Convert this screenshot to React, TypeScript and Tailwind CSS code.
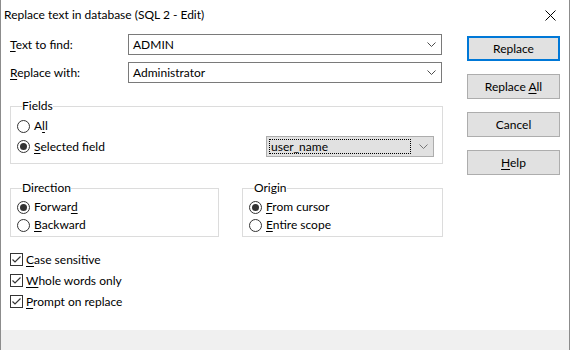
import React from "react";

const font = { fontFamily: 'Lato, "Noto Sans", sans-serif' };

function Chevron({ color = "#4d4d4d" }: { color?: string }) {
  return (
    <svg width="9" height="5" viewBox="0 0 9 5">
      <polyline points="0.5,0.5 4.5,4.5 8.5,0.5" fill="none" stroke={color} strokeWidth="1" />
    </svg>
  );
}

function Ul({ children }: { children: React.ReactNode }) {
  return <span className="underline underline-offset-2">{children}</span>;
}

function Radio({ checked, children }: { checked?: boolean; children: React.ReactNode }) {
  return (
    <div className="flex items-center gap-[4px] h-[18px]">
      <span className="w-[13px] h-[13px] rounded-full border border-[#333333] flex items-center justify-center bg-white">
        {checked && <span className="w-[7px] h-[7px] rounded-full bg-[#333333]" />}
      </span>
      <span>{children}</span>
    </div>
  );
}

function Check({ children }: { children: React.ReactNode }) {
  return (
    <div className="flex items-center gap-[3px] h-[21px]">
      <span className="w-[13px] h-[13px] border border-[#333333] flex items-center justify-center bg-white">
        <svg width="11" height="11" viewBox="0 0 11 11">
          <polyline points="1.5,5.5 4,8 9.5,2.5" fill="none" stroke="#333333" strokeWidth="1.2" />
        </svg>
      </span>
      <span>{children}</span>
    </div>
  );
}

function Combo({ value }: { value: string }) {
  return (
    <div className="w-[314px] h-[21px] border border-[#7a7a7a] bg-white flex items-center pl-[4px] pr-[5px]">
      <span className="flex-1">{value}</span>
      <Chevron />
    </div>
  );
}

function Btn({ children, primary }: { children: React.ReactNode; primary?: boolean }) {
  return (
    <div
      className={
        "w-[93px] h-[25px] bg-[#e1e1e1] flex items-center justify-center " +
        (primary ? "border-2 border-[#0078d7]" : "border border-[#adadad]")
      }
    >
      <span>{children}</span>
    </div>
  );
}

function Group({ title, className, children }: { title: string; className: string; children: React.ReactNode }) {
  return (
    <fieldset className={"border border-[#dcdcdc] " + className}>
      <legend className="ml-[5px] px-0 leading-[14px]">{title}</legend>
      {children}
    </fieldset>
  );
}

export default function App() {
  return (
    <div style={font} className="w-[570px] h-[350px] text-[12px] text-black bg-white border-x border-[#8c8c8c] flex flex-col overflow-hidden">
      <div className="h-[30px] flex items-center justify-between pl-[3px] pr-[13px] shrink-0">
        <span>Replace text in database (SQL 2 - Edit)</span>
        <svg width="11" height="11" viewBox="0 0 11 11">
          <path d="M0.5 0.5 L10.5 10.5 M10.5 0.5 L0.5 10.5" stroke="#000" strokeWidth="1" />
        </svg>
      </div>
      <div className="flex-1 flex pl-[9px] pt-[4px]">
        <div className="w-[433px] flex flex-col">
          <div className="flex items-center">
            <span className="w-[118px]"><Ul>T</Ul>ext to find:</span>
            <Combo value="ADMIN" />
          </div>
          <div className="flex items-center mt-[7px]">
            <span className="w-[118px]"><Ul>R</Ul>eplace with:</span>
            <Combo value="Administrator" />
          </div>
          <Group title="Fields" className="mt-[16px] h-[65px] pl-[6px] pr-[8px]">
            <div className="flex flex-col pt-[4px] gap-[1px]">
              <Radio>A<Ul>l</Ul>l</Radio>
              <div className="flex items-center justify-between">
                <Radio checked><Ul>S</Ul>elected field</Radio>
                <div className="w-[168px] h-[21px] bg-[#e1e1e1] border border-[#adadad] flex items-center pl-[2px] pr-[5px]">
                  <span className="flex-1 h-[15px] border border-dotted border-black leading-[13px] pl-px">user_name</span>
                  <span className="ml-[8px]"><Chevron color="#777777" /></span>
                </div>
              </div>
            </div>
          </Group>
          <div className="flex justify-between mt-[17px]">
            <Group title="Direction" className="w-[209px] h-[56px] pl-[6px]">
              <div className="flex flex-col pt-[3px]">
                <Radio checked>Forwar<Ul>d</Ul></Radio>
                <Radio><Ul>B</Ul>ackward</Radio>
              </div>
            </Group>
            <Group title="Origin" className="w-[201px] h-[56px] pl-[6px]">
              <div className="flex flex-col pt-[3px]">
                <Radio checked><Ul>F</Ul>rom cursor</Radio>
                <Radio><Ul>E</Ul>ntire scope</Radio>
              </div>
            </Group>
          </div>
          <div className="flex flex-col mt-[12px]">
            <Check><Ul>C</Ul>ase sensitive</Check>
            <Check><Ul>W</Ul>hole words only</Check>
            <Check><Ul>P</Ul>rompt on replace</Check>
          </div>
        </div>
        <div className="flex flex-col gap-[13px] ml-[24px] pt-[2px]">
          <Btn primary>Replace</Btn>
          <Btn>Replace <Ul>A</Ul>ll</Btn>
          <Btn>Cancel</Btn>
          <Btn><Ul>H</Ul>elp</Btn>
        </div>
      </div>
      <div className="h-[20px] bg-[#f0f0f0] shrink-0" />
    </div>
  );
}
